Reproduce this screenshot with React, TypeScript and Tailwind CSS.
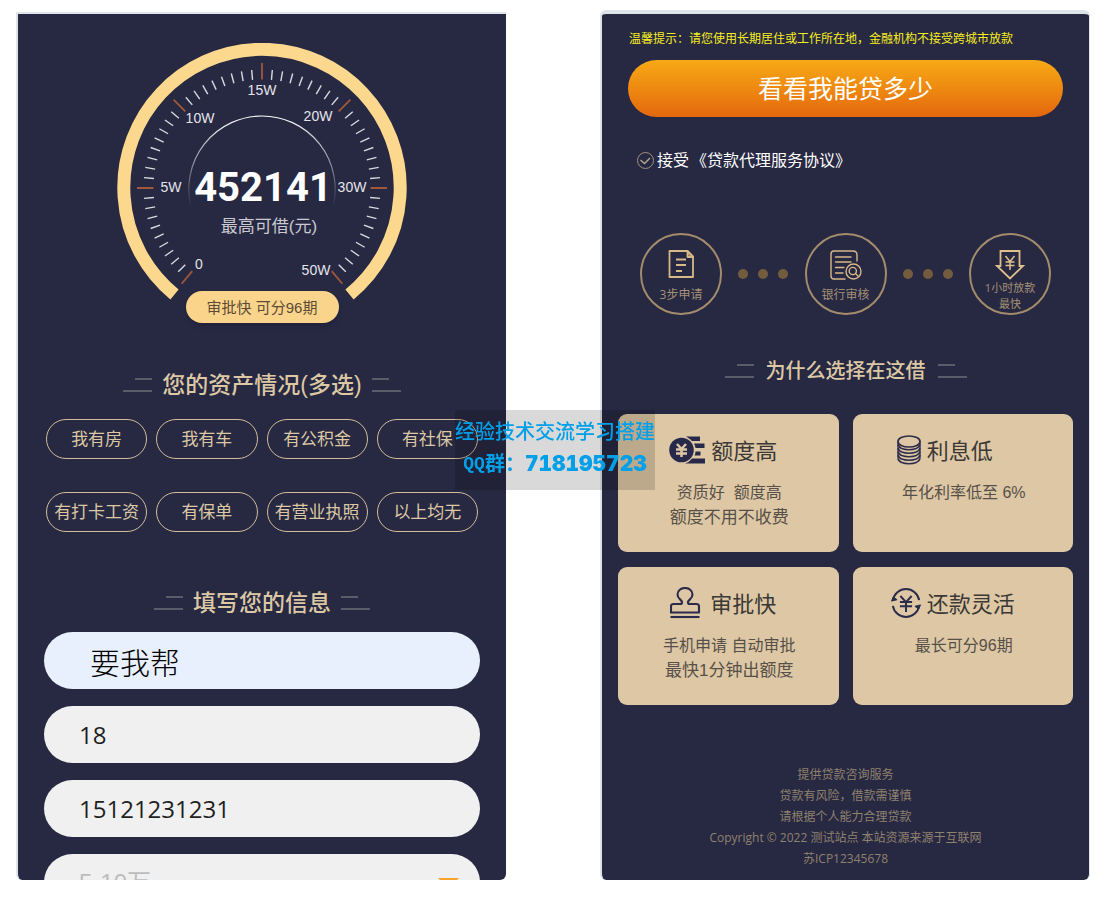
import { useState, type ReactNode } from "react";

const assets = ["我有房", "我有车", "有公积金", "有社保", "有打卡工资", "有保单", "有营业执照", "以上均无"];

// angles are degrees clockwise from the top of the dial
const majorTicks = [-140, -90, -45, 0, 45, 90, 140];
const minorTicks = Array.from({ length: 57 }, (_, i) => -140 + i * 5).filter((a) => !majorTicks.includes(a));

const dialLabels = [
    { text: "0", x: 82, y: 226 },
    { text: "5W", x: 54, y: 149 },
    { text: "10W", x: 83, y: 80 },
    { text: "15W", x: 145, y: 52 },
    { text: "20W", x: 201, y: 78 },
    { text: "30W", x: 235, y: 149 },
    { text: "50W", x: 199, y: 232 },
];

function Gauge() {
    return (
        <div className="flex flex-col items-center">
            <svg width="290" height="258" viewBox="0 0 290 258" role="img" aria-label="最高可借452141元">
                <defs>
                    <linearGradient id="innerArc" x1="0" y1="72" x2="0" y2="164" gradientUnits="userSpaceOnUse">
                        <stop offset="0" stopColor="#ffffff" />
                        <stop offset="0.5" stopColor="#ffffff" stopOpacity="0.5" />
                        <stop offset="1" stopColor="#ffffff" stopOpacity="0" />
                    </linearGradient>
                </defs>
                <path d="M57.5 251.5 A138.2 138.2 0 1 1 232.5 251.5" fill="none" stroke="#fbd88d" strokeWidth="13" />
                {minorTicks.map((a) => (
                    <line key={a} x1="145" y1="26.500" x2="145" y2="36.500" stroke="#d9d9e0" strokeWidth="1.400" transform={`rotate(${a} 145 145)`} />
                ))}
                {majorTicks.map((a) => (
                    <line key={a} x1="145" y1="20" x2="145" y2="36.500" stroke="#a0583a" strokeWidth="1.800" transform={`rotate(${a} 145 145)`} />
                ))}
                <path d="M74 164 A73.2 73.2 0 1 1 216 164" fill="none" stroke="url(#innerArc)" strokeWidth="1.200" />
                <g fill="#e4e4ea" fontSize="14" fontFamily="Liberation Sans, sans-serif" textAnchor="middle">
                    {dialLabels.map((l) => (
                        <text key={l.text} x={l.x} y={l.y}>{l.text}</text>
                    ))}
                </g>
                <text x="146" y="158" fill="#ffffff" fontSize="40" fontWeight="700" fontFamily="Roboto, sans-serif" textAnchor="middle">452141</text>
                <text x="152" y="189" fill="#c9c9d1" fontSize="17" fontFamily="Liberation Sans, Noto Sans CJK SC, sans-serif" textAnchor="middle">最高可借(元)</text>
            </svg>
            <div className="relative -mt-2.5 flex h-8 w-[153px] items-center justify-center rounded-full bg-[#f9d48a] pt-0.5 font-['Liberation_Sans','Noto_Sans_CJK_SC',sans-serif] text-[15px] text-[#5c4b35] shadow-md">
                审批快 可分96期
            </div>
        </div>
    );
}

function Bars({ flip = false }: { flip?: boolean }) {
    return (
        <span className={flip ? "flex flex-col items-start gap-2.5" : "flex flex-col items-end gap-2.5"}>
            <span className="h-0.5 w-[17px] bg-[#5a5b6b]"></span>
            <span className="h-0.5 w-[29px] bg-[#5a5b6b]"></span>
        </span>
    );
}

function DocIcon() {
    return (
        <svg width="26" height="28" viewBox="0 0 26 28" fill="none" stroke="#d8b886" strokeWidth="1.800" strokeLinejoin="round">
            <path d="M1.500 1H19.500L25 6.500V27H1.500Z" />
            <path d="M19.500 1V7H25Z" fill="#8d7a62" />
            <path d="M8 9.500H18M8 15H18M8 21H14" strokeWidth="1.800" />
        </svg>
    );
}

function ReviewIcon() {
    return (
        <svg width="32" height="30" viewBox="0 0 32 30" fill="none" stroke="#d8b886" strokeWidth="1.400" strokeLinecap="round">
            <path d="M15 29H4Q1 29 1 26V4Q1 1 4 1H23Q27 1 27 5V11" />
            <path d="M5.500 7H21M5.500 12H21M5.500 17.500H14M5.500 23H13" />
            <circle cx="23.500" cy="21.500" r="7.500" />
            <circle cx="22.800" cy="21" r="3.600" />
            <path d="M25.500 23.500L28 26" />
        </svg>
    );
}

function PayoutIcon() {
    return (
        <svg width="30" height="30" viewBox="0 0 30 30" fill="none" stroke="#dfbf8c" strokeWidth="1.800">
            <path d="M5.500 1H24.500V16H28L15 28.500L2 16H5.500Z" />
            <path d="M10.500 6L15 11.500L19.500 6M15 11.500V20M10.500 12H19.500M10.500 15.500H19.500" strokeWidth="1.500" />
        </svg>
    );
}

function QuotaIcon() {
    return (
        <svg width="36" height="28" viewBox="0 0 36 28">
            <g fill="#28284a">
                <path d="M17 0.500H31V5H23Q20.500 2.500 17 0.500Z" />
                <path d="M25 7.500H35.500V12H26.500Q26 9.500 25 7.500Z" />
                <path d="M26.500 15.500H31.500V19.500H25.500Q26.500 17.500 26.500 15.500Z" />
                <path d="M23 22.500H36V27.500H16Q20.500 26 23 22.500Z" />
                <circle cx="12.500" cy="14" r="12.300" />
            </g>
            <path d="M8 8L12.500 13L17 8M12.500 13V21M7 13.500H18M7 17.500H18" fill="none" stroke="#ddc7a4" strokeWidth="2.500" />
        </svg>
    );
}

function CoinsIcon() {
    return (
        <svg width="24" height="30" viewBox="0 0 24 30" fill="none" stroke="#2d2c4a" strokeWidth="1.700">
            <ellipse cx="12" cy="6.500" rx="11" ry="5.500" />
            <path d="M1 6.500V23.500M23 6.500V23.500" strokeWidth="1.300" />
            <path d="M1 9.500C2.500 16.500 21.500 16.500 23 9.500M1 13C2.500 20 21.500 20 23 13M1 16.500C2.500 23.500 21.500 23.500 23 16.500M1 20C2.500 27 21.500 27 23 20M1 23.500C2.500 30.500 21.500 30.500 23 23.500" />
        </svg>
    );
}

function StampIcon() {
    return (
        <svg width="34" height="32" viewBox="0 0 34 32" fill="none" stroke="#2b2b4c" strokeWidth="2.100" strokeLinejoin="round">
            <path d="M1 25.500V19.500Q1 17 3.500 17H10.500Q12 17 12 15.500C12 12.500 7.500 12 7.500 7.500C7.500 3.500 11 1 15 1S22.500 3.500 22.500 7.500C22.500 12 18 12.500 18 15.500Q18 17 19.500 17H26.500Q29 17 29 19.500V25.500Z" />
            <path d="M0.500 30H29.500" />
        </svg>
    );
}

function RepayIcon() {
    return (
        <svg width="30" height="30" viewBox="0 0 32 32" fill="none" stroke="#2b2b4c" strokeWidth="2.100">
            <path d="M2 13A14.200 14.200 0 0 1 30 13" />
            <path d="M30 19A14.200 14.200 0 0 1 2 19" />
            <path d="M0.500 14L6.500 12.500L2.500 9.500ZM31.500 18L25.500 19.500L29.500 22.500Z" fill="#2b2b4c" strokeWidth="1" />
            <path d="M10 8.500L16 15L22 8.500M16 15V25.500M9.500 15H22.500M9.500 19.500H22.500" />
        </svg>
    );
}

function SectionTitle({ children }: { children: ReactNode }) {
    return (
        <div className="flex items-center justify-center gap-2.5">
            <Bars />
            <h2 className="font-['Liberation_Sans','Noto_Sans_CJK_SC',sans-serif] text-[23px] leading-8 font-medium text-[#dcc8a4]">{children}</h2>
            <Bars flip />
        </div>
    );
}

function Step({ icon, children }: { icon: ReactNode; children: ReactNode }) {
    return (
        <li className="flex size-[82px] flex-col items-center rounded-full border-2 border-[#a38c6c] pt-[15px] text-center text-[12px] text-[#a39176]">
            {icon}
            {children}
        </li>
    );
}

function Dots() {
    return (
        <li aria-hidden="true" className="flex gap-2.5">
            <span className="size-2.5 rounded-full bg-[#735c3e]"></span>
            <span className="size-2.5 rounded-full bg-[#735c3e]"></span>
            <span className="size-2.5 rounded-full bg-[#735c3e]"></span>
        </li>
    );
}

function Reason({ icon, title, line1, line2, shift = "pr-2.5" }: { icon: ReactNode; title: string; line1: string; line2?: string; shift?: string }) {
    return (
        <li className="h-[138px] rounded-[9px] bg-[#ddc7a4] pt-5 text-center">
            <div className={`flex h-8 items-center justify-center gap-1.5 ${shift}`}>
                {icon}
                <h3 className="text-[22px] leading-8 text-[#3b3836]">{title}</h3>
            </div>
            <div className="mt-3.5 pl-0.5 font-['Liberation_Sans','Noto_Sans_CJK_SC',sans-serif] leading-[25px] text-[#565049]">
                <p className="text-[16px] whitespace-pre">{line1}</p>
                {line2 && <p className="text-[17px]">{line2}</p>}
            </div>
        </li>
    );
}

function LoanForm() {
    const [picked, setPicked] = useState<string[]>([]);
    const toggle = (name: string) =>
        setPicked(picked.includes(name) ? picked.filter((p) => p !== name) : [...picked, name]);
    const field = "h-[57px] w-full shrink-0 rounded-full bg-[#f0f0f0] px-[35px] text-[24px] text-[#1f1f1f] outline-none";

    return (
        <section className="mt-0.5 min-w-0 overflow-hidden rounded-b-md border-t-2 border-l-2 border-[#dfe4ea] bg-[#272842] px-[26px] pt-[29px]">
            <Gauge />
            <div className="mt-[46px]">
                <SectionTitle>您的资产情况(多选)</SectionTitle>
            </div>
            <div className="mt-[18px] grid grid-cols-4 gap-x-[9px] gap-y-[33px] px-0.5">
                {assets.map((name) => (
                    <button
                        key={name}
                        type="button"
                        aria-pressed={picked.includes(name)}
                        onClick={() => toggle(name)}
                        className="h-10 rounded-full border border-[#d2be9c] text-[17px] whitespace-nowrap text-[#dcc8a4] aria-pressed:bg-white/10"
                    >
                        {name}
                    </button>
                ))}
            </div>
            <div className="mt-[55px]">
                <SectionTitle>填写您的信息</SectionTitle>
            </div>
            <form className="mt-[13px] flex flex-col gap-[17px]">
                <input aria-label="姓名" defaultValue="要我帮" className="h-[57px] w-full shrink-0 rounded-full bg-[#e8f0fe] px-[46px] font-['Liberation_Serif','Noto_Sans_CJK_SC',serif] text-[30px] font-light text-black outline-none" />
                <input aria-label="年龄" inputMode="numeric" defaultValue="18" className={field} />
                <input aria-label="手机号" type="tel" defaultValue="15121231231" className={field} />
                <div className="relative">
                    <select aria-label="借款金额" className="h-[57px] w-full appearance-none rounded-full bg-[#f0f0f0] px-[35px] font-['Liberation_Sans','Noto_Sans_CJK_SC',sans-serif] text-[24px] text-[#bcbcbc] outline-none">
                        <option>5-10万</option>
                        <option>10-20万</option>
                        <option>20-50万</option>
                    </select>
                    <svg className="pointer-events-none absolute top-6 right-[21px]" width="21" height="11" viewBox="0 0 21 11">
                        <path d="M0 0H21L10.500 11Z" fill="#f9a32a" />
                    </svg>
                </div>
            </form>
        </section>
    );
}

function LoanInfo() {
    return (
        <section className="min-w-0 overflow-hidden rounded-md border-t-4 border-r border-l-2 border-[#dfe4ea] bg-[#272842] px-4 pt-[15px]">
            <p className="px-[11px] text-[12px] leading-5 whitespace-nowrap text-[#f7ee22]">
                温馨提示：请您使用长期居住或工作所在地，金融机构不接受跨城市放款
            </p>
            <div className="px-2.5 pt-[11px]">
                <button type="button" className="h-[57px] w-full rounded-full bg-linear-to-b from-[#f6a915] to-[#e4670d] text-[25px] text-white">
                    看看我能贷多少
                </button>
            </div>
            <div className="mt-[31px] flex items-center px-[19px] text-[16px] leading-6 text-white">
                <label className="flex items-center gap-[3px]">
                    <span className="relative size-[17px]">
                        <input type="checkbox" defaultChecked className="peer block size-[17px] appearance-none rounded-full border border-[#a0937c]" />
                        <svg className="pointer-events-none absolute inset-0 hidden peer-checked:block" width="17" height="17" viewBox="0 0 17 17" fill="none" stroke="#b5a68c" strokeWidth="1.400">
                            <path d="M3.500 8L7.500 11.500L13 6" />
                        </svg>
                    </span>
                    接受
                </label>
                <a href="#agreement" className="pl-0.5">《贷款代理服务协议》</a>
            </div>
            <ul className="mt-[61px] flex items-center justify-between px-[22px]">
                <Step icon={<DocIcon />}><span className="mt-2">3步申请</span></Step>
                <Dots />
                <Step icon={<ReviewIcon />}><span className="mt-1.5">银行审核</span></Step>
                <Dots />
                <Step icon={<PayoutIcon />}>
                    <span className="text-[11px] leading-4 whitespace-nowrap">1小时放款<br />最快</span>
                </Step>
            </ul>
            <div className="mt-10 flex items-center justify-center gap-3">
                <Bars />
                <h2 className="text-[20px] leading-8 font-medium text-[#dcc8a4]">为什么选择在这借</h2>
                <Bars flip />
            </div>
            <ul className="mt-[27px] grid grid-cols-2 gap-x-3.5 gap-y-[15px]">
                <Reason icon={<QuotaIcon />} title="额度高" line1="资质好  额度高" line2="额度不用不收费" />
                <Reason icon={<CoinsIcon />} title="利息低" line1="年化利率低至 6%" shift="pr-9" />
                <Reason icon={<StampIcon />} title="审批快" line1="手机申请 自动审批" line2="最快1分钟出额度" />
                <Reason icon={<RepayIcon />} title="还款灵活" line1="最长可分96期" shift="pr-5" />
            </ul>
            <footer className="mt-[59px] text-center text-[12px] leading-[21px] text-[#8f826d]">
                <p>提供贷款咨询服务</p>
                <p>贷款有风险，借款需谨慎</p>
                <p>请根据个人能力合理贷款</p>
                <p>Copyright © 2022 测试站点 本站资源来源于互联网</p>
                <p>苏ICP12345678</p>
            </footer>
        </section>
    );
}

export default function App() {
    return (
        <main className="grid h-screen grid-cols-2 grid-rows-1 gap-x-[94px] bg-white pt-2.5 pr-5 pb-5 pl-4 font-['Open_Sans','Noto_Sans_CJK_SC',sans-serif]">
            <LoanForm />
            <LoanInfo />
            <div className="pointer-events-none fixed inset-0 m-auto h-20 w-[200px] bg-black/15 pt-1.5 text-center text-[#00a0e9]">
                <p className="text-[20px] leading-8 font-medium whitespace-nowrap">经验技术交流学习搭建</p>
                <p className="flex items-center justify-center leading-8 whitespace-nowrap">
                    <span className="font-['Liberation_Mono',monospace] text-[18px] font-bold">QQ</span>
                    <span className="text-[20px] font-bold">群：</span>
                    <span className="font-['Inter',sans-serif] text-[21px] font-black tabular-nums">718195723</span>
                </p>
            </div>
        </main>
    );
}
